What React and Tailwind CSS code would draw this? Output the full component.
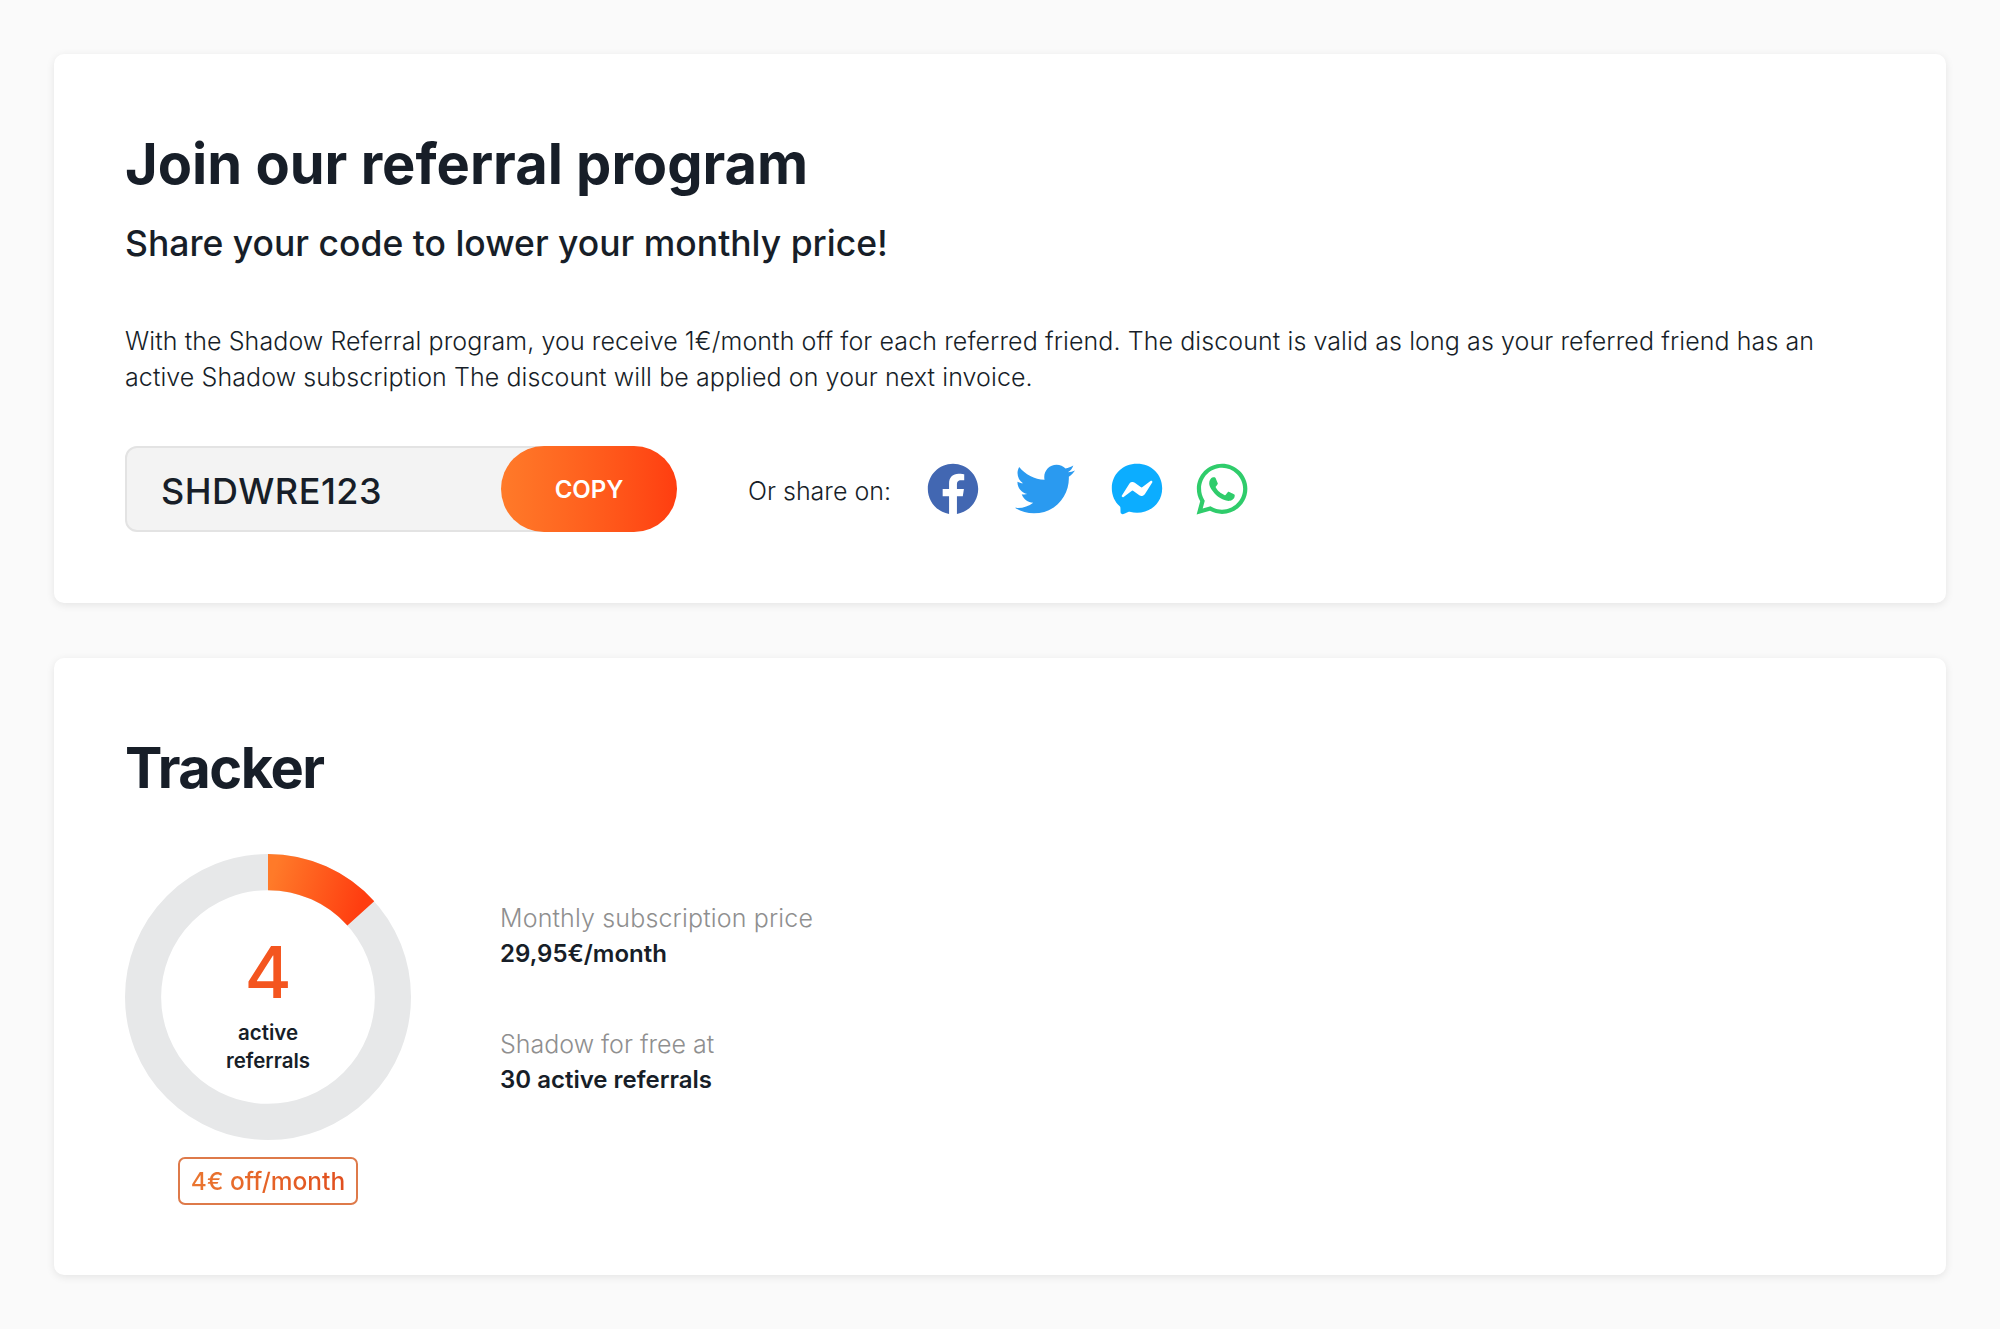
import React from 'react';
import { FaFacebook, FaTwitter, FaFacebookMessenger, FaWhatsapp } from 'react-icons/fa';

const Card = ({ className, children }) => (
  <section className={`bg-white rounded-[10px] shadow-[0_2px_8px_rgba(0,0,0,0.09)] px-[71px] ${className}`}>{children}</section>
);

const Donut = () => (
  <div className="relative w-[286px] h-[286px]">
    <svg width="286" height="286" viewBox="0 0 285 285">
      <defs>
        <linearGradient id="arc" x1="142" y1="40" x2="232" y2="65" gradientUnits="userSpaceOnUse">
          <stop offset="0" stopColor="#ff7a29" />
          <stop offset="1" stopColor="#ff3d10" />
        </linearGradient>
      </defs>
      <circle cx="142.5" cy="142.5" r="124.5" fill="none" stroke="#e7e8e9" strokeWidth="36" />
      <path d="M142.5 18 A124.5 124.5 0 0 1 235 59.2" fill="none" stroke="url(#arc)" strokeWidth="36" />
    </svg>
    <div className="absolute inset-0 flex flex-col items-center pt-[78px]">
      <div className="text-[72px] leading-[80px] font-medium text-[#f4551f]">4</div>
      <div className="mt-[7px] text-[20.5px] leading-[28px] font-semibold text-center text-[#171e28]">active<br />referrals</div>
    </div>
  </div>
);

export default function App() {
  return (
    <div className="min-h-[1329px] bg-[#fafafa] pt-[54px] px-[54px] font-['Inter',sans-serif] text-[#171e28]">
      <Card className="h-[549px] pt-[76px]">
        <h1 className="text-[56px] leading-[68px] font-bold">Join our referral program</h1>
        <h2 className="mt-[25px] text-[35.5px] leading-[42px] font-medium">Share your code to lower your monthly price!</h2>
        <p className="mt-[58px] text-[25px] leading-[36px] font-light tracking-[0.09px]">
          With the Shadow Referral program, you receive 1€/month off for each referred friend. The discount is valid as long as your referred friend has an active Shadow subscription The discount will be applied on your next invoice.
        </p>
        <div className="mt-[51px] flex items-center">
          <div className="flex w-[500px] h-[86px] rounded-[12px] border-2 border-[#e3e3e3] bg-[#f3f3f3]">
            <div className="flex-1 flex items-center pl-[34px] pt-[3px] text-[36px] font-medium tracking-[0.5px]">SHDWRE123</div>
          </div>
          <button className="-ml-[124px] w-[176px] h-[86px] pt-[2px] rounded-full bg-gradient-to-r from-[#ff7a29] to-[#ff3d10] text-white text-[24px] font-semibold">COPY</button>
          <span className="ml-[71px] pt-[5px] text-[25px] font-light">Or share on:</span>
          <div className="ml-[36px] flex items-center">
            <FaFacebook className="w-[52px] h-[52px] text-[#4267b2]" />
            <FaTwitter className="ml-[36px] w-[60px] h-[60px] text-[#2a9af0]" />
            <FaFacebookMessenger className="ml-[36px] w-[52px] h-[52px] text-[#0cadff]" />
            <FaWhatsapp className="ml-[30px] w-[58px] h-[58px] text-[#2fcc6b]" />
          </div>
        </div>
      </Card>
      <Card className="mt-[55px] h-[617px] pt-[76px]">
        <h2 className="text-[56px] leading-[68px] font-bold tracking-[-1.5px]">Tracker</h2>
        <div className="mt-[52px] flex">
          <div className="flex flex-col items-center">
            <Donut />
            <div className="mt-[17px] w-[180px] h-[48px] flex items-center justify-center rounded-[7px] border-2 border-[#de7a4a]">
              <span className="text-[24.5px] font-medium bg-gradient-to-r from-[#ea7630] to-[#e04e1e] bg-clip-text text-transparent">4€ off/month</span>
            </div>
          </div>
          <div className="ml-[89px] pt-[46px] text-[24px] leading-[36px]">
            <div className="text-[25px] font-light text-[#8f8f8f] tracking-[0.15px]">Monthly subscription price</div>
            <div className="font-semibold">29,95€/month</div>
            <div className="mt-[54px] text-[25px] font-light text-[#8f8f8f]">Shadow for free at</div>
            <div className="font-semibold">30 active referrals</div>
          </div>
        </div>
      </Card>
    </div>
  );
}
